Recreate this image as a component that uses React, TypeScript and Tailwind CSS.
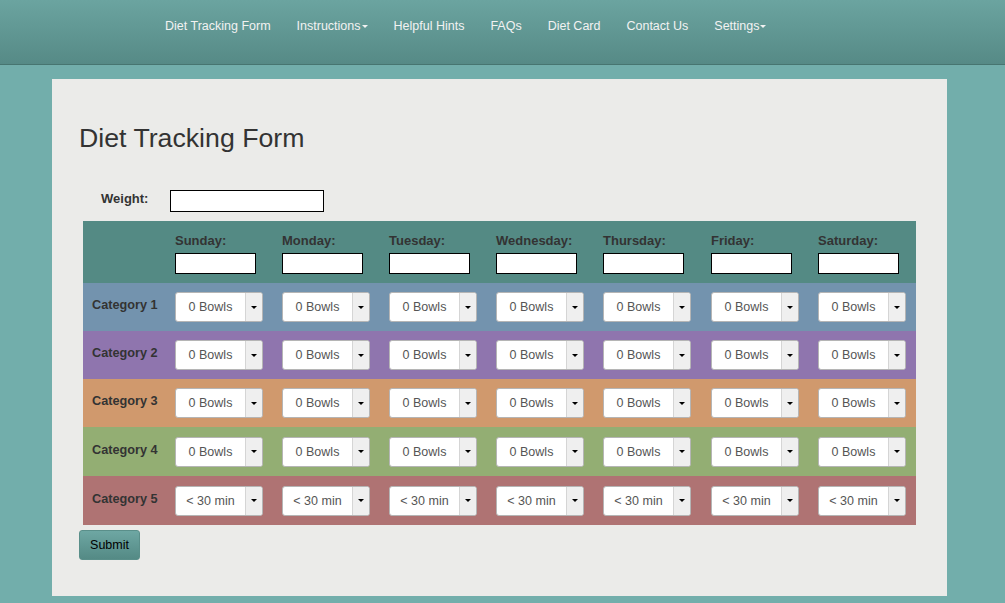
import React from "react";

const days = ["Sunday", "Monday", "Tuesday", "Wednesday", "Thursday", "Friday", "Saturday"];
const rows = [
  { label: "Category 1", bg: "bg-[#7393ae]", value: "0 Bowls", h: "h-[48px]" },
  { label: "Category 2", bg: "bg-[#8f75ae]", value: "0 Bowls", h: "h-[48px]" },
  { label: "Category 3", bg: "bg-[#d0996d]", value: "0 Bowls", h: "h-[48px]" },
  { label: "Category 4", bg: "bg-[#93ae73]", value: "0 Bowls", h: "h-[49px]" },
  { label: "Category 5", bg: "bg-[#af7373]", value: "< 30 min", h: "h-[49px]" },
];

const cols = "grid grid-cols-[92px_107px_107px_107px_107px_108px_107px_98px]";

function Caret() {
  return <span className="inline-block w-0 h-0 border-l-[3px] border-r-[3px] border-t-[3px] border-l-transparent border-r-transparent border-t-black" />;
}

function FakeSelect({ value }: { value: string }) {
  return (
    <div className="flex w-[88px] h-[30px] bg-white border border-[#b5b5b5] rounded-[3px] overflow-hidden">
      <div className="flex-1 flex items-center justify-center text-[12.5px] text-[#555] pt-[1px]">{value}</div>
      <div className="w-[17px] bg-[#efefef] border-l border-[#d5d5d5] flex items-center justify-center">
        <Caret />
      </div>
    </div>
  );
}

export default function App() {
  const nav = ["Diet Tracking Form", "Instructions", "Helpful Hints", "FAQs", "Diet Card", "Contact Us", "Settings"];
  const dropdown = new Set(["Instructions", "Settings"]);
  return (
    <div className="min-h-[603px] bg-[#72aeab] text-[#333]" style={{ fontFamily: '"Liberation Sans", Arial, sans-serif' }}>
      <div className="h-[65px] bg-gradient-to-b from-[#6ba4a0] to-[#568a86] border-b border-[#477570] flex items-center pl-[152px] pb-[12px]">
        {nav.map((n) => (
          <div key={n} className="px-[13px] text-[12.5px] text-[#f2f2f2] flex items-center">
            {n}
            {dropdown.has(n) && (
              <span className="ml-[1px] inline-block w-0 h-0 border-l-[3px] border-r-[3px] border-t-[3px] border-l-transparent border-r-transparent border-t-[#f2f2f2]" />
            )}
          </div>
        ))}
      </div>
      <div className="pt-[14px]">
        <div className="ml-[52px] w-[895px] h-[517px] bg-[#ebebe9] pl-[27px] pt-[40px]">
          <h1 className="text-[26.7px] leading-[36px] text-[#333] m-0 pt-[1px]">Diet Tracking Form</h1>
          <div className="flex items-center mt-[34px] h-[22px]">
            <span className="w-[91px] pl-[22px] text-[13px] font-bold -mt-[4px]">Weight:</span>
            <div className="w-[154px] h-[22px] bg-white border border-black" />
          </div>
          <div className="ml-[4px] mt-[9px] w-[833px]">
            <div className={`${cols} h-[62px] bg-[#548a84]`}>
              <div />
              {days.map((d) => (
                <div key={d} className="pt-[13px]">
                  <div className="text-[13px] font-bold text-[#333] leading-[14px]">{d}:</div>
                  <div className="mt-[5px] w-[81px] h-[21px] bg-white border border-black" />
                </div>
              ))}
            </div>
            {rows.map((r) => (
              <div key={r.label} className={`${cols} ${r.h} ${r.bg} items-center`}>
                <div className="pl-[9px] text-[12.7px] font-bold text-[#333] -mt-[2px]">{r.label}</div>
                {days.map((d) => (
                  <div key={d}>
                    <FakeSelect value={r.value} />
                  </div>
                ))}
              </div>
            ))}
          </div>
          <button className="mt-[5px] w-[61px] h-[30px] rounded-[3px] bg-gradient-to-b from-[#6ea7a3] to-[#548a85] border border-[#5a8f8a] text-[12.5px] text-black">
            Submit
          </button>
        </div>
      </div>
    </div>
  );
}
